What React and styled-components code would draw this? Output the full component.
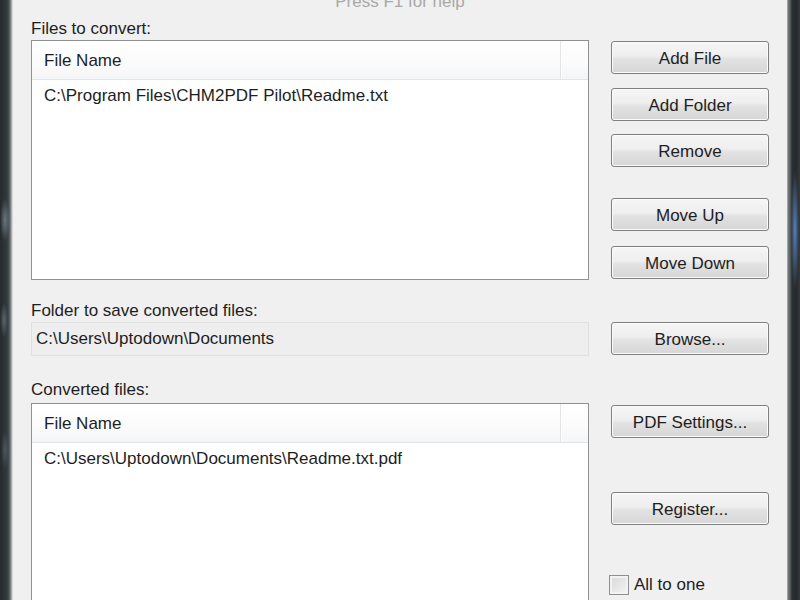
import styled, {createGlobalStyle} from "styled-components";

const GlobalStyle = createGlobalStyle`
    html, body {
        margin: 0;
        padding: 0;
        background: #f0f0f0;
    }
    body {
        font-family: "Liberation Sans", Arial, sans-serif;
        font-size: 17px;
        color: #1e1e1e;
    }
`;

const App = () => {
    return (
        <Window>
            <GlobalStyle/>
            <LeftFrame/>
            <Panel>
                <Help>Press F1 for help</Help>

                <Section $top={7}>
                    <Label>Files to convert:</Label>
                    <ListBox $height={240}>
                        <ListHeader>
                            <HeaderCell>File Name</HeaderCell>
                            <HeaderRest/>
                        </ListHeader>
                        <ListRow>C:\Program Files\CHM2PDF Pilot\Readme.txt</ListRow>
                    </ListBox>
                    <ButtonColumn>
                        <Button>Add File</Button>
                        <Button $gap={14}>Add Folder</Button>
                        <Button $gap={13}>Remove</Button>
                        <Button $gap={31}>Move Up</Button>
                        <Button $gap={15}>Move Down</Button>
                    </ButtonColumn>
                </Section>

                <Section $top={21}>
                    <Label>Folder to save converted files:</Label>
                    <PathBox>C:\Users\Uptodown\Documents</PathBox>
                    <ButtonColumn $offset={1}>
                        <Button>Browse...</Button>
                    </ButtonColumn>
                </Section>

                <Section $top={24}>
                    <Label>Converted files:</Label>
                    <ListBox $height={230} $offset={3}>
                        <ListHeader>
                            <HeaderCell>File Name</HeaderCell>
                            <HeaderRest/>
                        </ListHeader>
                        <ListRow>C:\Users\Uptodown\Documents\Readme.txt.pdf</ListRow>
                    </ListBox>
                    <ButtonColumn $offset={5}>
                        <Button>PDF Settings...</Button>
                        <Button $gap={54}>Register...</Button>
                        <CheckRow>
                            <CheckBox/>
                            <span>All to one</span>
                        </CheckRow>
                    </ButtonColumn>
                </Section>
            </Panel>
            <RightFrame/>
        </Window>
    );
};
export default App;

const Window = styled.div`
    display: flex;
    height: 600px;
    overflow: hidden;
`;

const LeftFrame = styled.div`
    width: 13px;
    flex-shrink: 0;
    background:
        radial-gradient(ellipse 5px 22px at 5px 220px, rgba(150, 175, 190, 0.55), transparent),
        radial-gradient(ellipse 4px 18px at 4px 320px, rgba(140, 165, 180, 0.45), transparent),
        radial-gradient(ellipse 4px 20px at 5px 450px, rgba(120, 140, 150, 0.4), transparent),
        linear-gradient(90deg, #262a2c 0px, #33383b 7px, #4b5053 9px, #8a8f92 11px, #c9cccd 12px, #e4e4e4 13px);
`;

const RightFrame = styled.div`
    width: 13px;
    flex-shrink: 0;
    background:
        radial-gradient(ellipse 4px 60px at 8px 230px, rgba(95, 145, 215, 0.85), transparent),
        linear-gradient(90deg, #c4c6c7 0px, #7a7e81 1px, #5a5f62 3px, #2c3033 5px, #25292b 9px, #353a3d 13px);
`;

const Panel = styled.div`
    flex: 1;
    display: flex;
    flex-direction: column;
    padding: 0 18px;
    background: #f0f0f0;
`;

const Help = styled.div`
    margin-top: -8px;
    height: 20px;
    line-height: 20px;
    text-align: center;
    color: #a8a8a8;
`;

const Section = styled.div`
    display: grid;
    grid-template-columns: 558px 158px;
    column-gap: 22px;
    margin-top: ${({$top}) => $top}px;
`;

const Label = styled.div`
    grid-column: 1;
    grid-row: 1;
    height: 20px;
    line-height: 20px;
`;

const ListBox = styled.div`
    grid-column: 1;
    grid-row: 2;
    margin-top: ${({$offset}) => $offset || 1}px;
    height: ${({$height}) => $height}px;
    box-sizing: border-box;
    border: 1px solid #8f9293;
    background: #ffffff;
    display: flex;
    flex-direction: column;
`;

const ListHeader = styled.div`
    display: flex;
    height: 38px;
    border-bottom: 1px solid #e3e4e6;
    background: linear-gradient(#ffffff, #fbfbfc 60%, #f4f5f6);
`;

const HeaderCell = styled.div`
    width: 529px;
    box-sizing: border-box;
    padding: 2px 12px 0;
    line-height: 36px;
    border-right: 1px solid #e2e4e6;
    box-shadow: 1px 0 0 #ffffff;
`;

const HeaderRest = styled.div`
    flex: 1;
`;

const ListRow = styled.div`
    padding: 6px 12px 4px;
    line-height: 20px;
`;

const PathBox = styled.div`
    grid-column: 1;
    grid-row: 2;
    margin-top: 1px;
    height: 34px;
    box-sizing: border-box;
    border: 1px solid #e0e0e0;
    background: #eeeeee;
    padding: 0 4px;
    line-height: 32px;
`;

const ButtonColumn = styled.div`
    grid-column: 2;
    grid-row: 2;
    display: flex;
    flex-direction: column;
    padding-top: ${({$offset}) => $offset ?? 2}px;
`;

const Button = styled.button`
    height: 33px;
    margin-top: ${({$gap}) => $gap || 0}px;
    box-sizing: border-box;
    border: 1px solid #7e8081;
    border-radius: 3px;
    background: linear-gradient(#f6f6f6 0%, #eeeeee 45%, #e2e2e2 55%, #d6d6d6 100%);
    box-shadow: inset 0 0 0 1px #fbfbfb;
    font-family: "Liberation Sans", Arial, sans-serif;
    font-size: 17px;
    color: #1e1e1e;
    padding: 2px 0 0;
    text-align: center;
`;

const CheckRow = styled.div`
    display: flex;
    align-items: center;
    gap: 5px;
    margin-top: 50px;
    margin-left: -2px;
    height: 20px;
    line-height: 20px;
`;

const CheckBox = styled.span`
    width: 20px;
    height: 20px;
    box-sizing: border-box;
    border: 1px solid #8e8f8f;
    background: linear-gradient(135deg, #d8d8d8, #f4f4f4);
    box-shadow: inset 0 0 0 2px #f2f2f2;
`;
